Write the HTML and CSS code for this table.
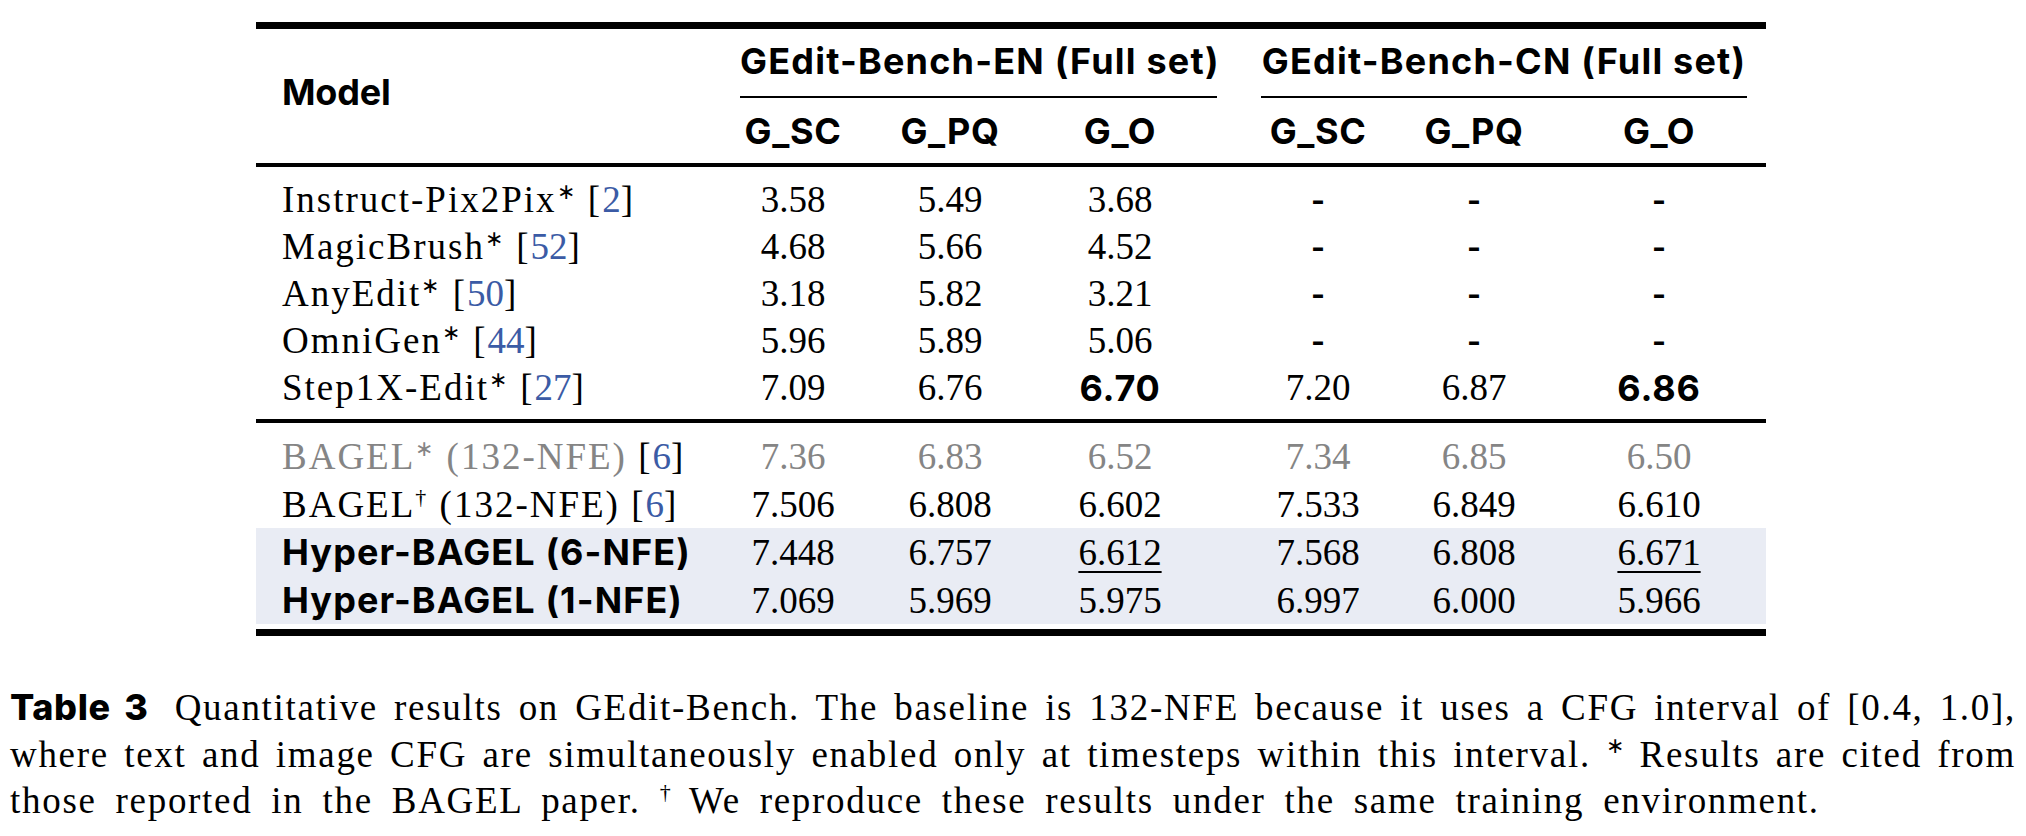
FILE: index.html
```html
<!DOCTYPE html>
<html lang="en">
<head>
<meta charset="utf-8">
<title>Table 3 — GEdit-Bench</title>
<link rel="stylesheet" href="styles.css">
</head>
<body>
<div class="figure">
  <table class="results">
    <colgroup>
      <col class="c-model"><col class="c-sc"><col class="c-pq"><col class="c-o">
      <col class="c-sc2"><col class="c-pq2"><col class="c-o2">
    </colgroup>
    <thead>
      <tr class="h1">
        <th rowspan="2" class="model-h">Model</th>
        <th colspan="3" class="grp"><div class="grp-label en">GEdit-Bench-EN (Full set)</div></th>
        <th colspan="3" class="grp"><div class="grp-label cn">GEdit-Bench-CN (Full set)</div></th>
      </tr>
      <tr class="h2">
        <th>G_SC</th><th>G_PQ</th><th class="o">G_O</th>
        <th>G_SC</th><th>G_PQ</th><th>G_O</th>
      </tr>
    </thead>
    <tbody class="group-a">
      <tr class="sep top"><td colspan="7"></td></tr>
      <tr><td class="name">Instruct-Pix2Pix<sup>∗</sup> [<span class="cite">2</span>]</td><td>3.58</td><td>5.49</td><td class="o">3.68</td><td class="na">-</td><td class="na">-</td><td class="na">-</td></tr>
      <tr><td class="name">MagicBrush<sup>∗</sup> [<span class="cite">52</span>]</td><td>4.68</td><td>5.66</td><td class="o">4.52</td><td class="na">-</td><td class="na">-</td><td class="na">-</td></tr>
      <tr><td class="name">AnyEdit<sup>∗</sup> [<span class="cite">50</span>]</td><td>3.18</td><td>5.82</td><td class="o">3.21</td><td class="na">-</td><td class="na">-</td><td class="na">-</td></tr>
      <tr><td class="name">OmniGen<sup>∗</sup> [<span class="cite">44</span>]</td><td>5.96</td><td>5.89</td><td class="o">5.06</td><td class="na">-</td><td class="na">-</td><td class="na">-</td></tr>
      <tr><td class="name">Step1X-Edit<sup>∗</sup> [<span class="cite">27</span>]</td><td>7.09</td><td>6.76</td><td class="o best">6.70</td><td>7.20</td><td>6.87</td><td class="best">6.86</td></tr>
      <tr class="sep bottom"><td colspan="7"></td></tr>
    </tbody>
    <tbody class="group-b">
      <tr class="sep top"><td colspan="7"></td></tr>
      <tr class="cited"><td class="name">BAGEL<sup>∗</sup> (132-NFE) <span class="br">[<span class="cite">6</span>]</span></td><td>7.36</td><td>6.83</td><td class="o">6.52</td><td>7.34</td><td>6.85</td><td>6.50</td></tr>
      <tr><td class="name">BAGEL<sup>†</sup> (132-NFE) [<span class="cite">6</span>]</td><td>7.506</td><td>6.808</td><td class="o">6.602</td><td>7.533</td><td>6.849</td><td>6.610</td></tr>
      <tr class="ours"><td class="name bold">Hyper-BAGEL (6-NFE)</td><td>7.448</td><td>6.757</td><td class="o"><span class="second">6.612</span></td><td>7.568</td><td>6.808</td><td><span class="second">6.671</span></td></tr>
      <tr class="ours"><td class="name bold">Hyper-BAGEL (1-NFE)</td><td>7.069</td><td>5.969</td><td class="o">5.975</td><td>6.997</td><td>6.000</td><td>5.966</td></tr>
      <tr class="sep end"><td colspan="7"></td></tr>
    </tbody>
  </table>

  <p class="caption">
    <span class="line"><span class="label">Table 3</span> Quantitative results on GEdit-Bench. The baseline is 132-NFE because it uses a CFG interval of [0.4, 1.0],</span>
    <span class="line">where text and image CFG are simultaneously enabled only at timesteps within this interval. <sup>∗</sup> Results are cited from</span>
    <span class="line last">those reported in the BAGEL paper. <sup>†</sup> We reproduce these results under the same training environment.</span>
  </p>
</div>
</body>
</html>
```

FILE: styles.css
```css
html, body {
  margin: 0;
  padding: 0;
  background: #ffffff;
}

body {
  width: 2026px;
  color: #000;
  font-family: "Liberation Serif", "Times New Roman", serif;
}

.figure {
  padding-top: 22px;
}

/* ---------- table ---------- */
.results {
  margin-left: 256px;
  width: 1510px;
  table-layout: fixed;
  border-collapse: collapse;
  border-top: 7px solid #000;
  border-bottom: 7px solid #000;
  font-size: 37px;
}

.c-model { width: 460px; }
.c-sc    { width: 154px; }
.c-pq    { width: 160px; }
.c-o     { width: 210px; }
.c-sc2   { width: 156px; }
.c-pq2   { width: 156px; }
.c-o2    { width: 214px; }

.results th,
.results td {
  padding: 0;
  text-align: center;
  white-space: nowrap;
}

.results th {
  font-family: Inter, Lato, "Noto Sans", sans-serif;
  font-weight: 700;
  font-size: 36px;
  letter-spacing: 0.6px;
}

.results .o { padding-right: 30px; }

thead { border-bottom: 4px solid #000; }

.model-h {
  text-align: left !important;
  padding-left: 26px !important;
  padding-bottom: 8px !important;
  vertical-align: middle;
  letter-spacing: -0.2px !important;
}

.h1 .grp { height: 67px; vertical-align: top; }

.grp-label {
  height: 67px;
  line-height: 64px;
  border-bottom: 2px solid #000;
  letter-spacing: 1.2px;
}
.grp-label.en { margin: 0 23px 0 24px; }
.grp-label.cn { margin: 0 19px 0 21px; }

.h2 th { height: 65px; line-height: 60px; }

.group-a { border-bottom: 4px solid #000; }

.group-a tr { height: 47px; }
.group-b tr { height: 48px; }

.results tr.sep td { height: auto; padding: 0; }
.group-a .sep.top td    { height: 9px; }
.group-a .sep.bottom td { height: 8px; }
.group-b .sep.top td    { height: 9px; }
.group-b .sep.end td    { height: 5px; }
.group-a tr.sep, .group-b tr.sep { height: auto; }

.results td.name {
  text-align: left;
  padding-left: 26px;
  letter-spacing: 2px;
}

.results sup {
  font-size: 22px;
  line-height: 0;
  vertical-align: 13px;
  letter-spacing: 0;
  margin-right: 2px;
}

.cite { color: #3b5ba5; letter-spacing: 0; }

.cited td { color: #858585; }
.cited .br { color: #000; }

.bold,
.best,
.na {
  font-family: Inter, Lato, "Noto Sans", sans-serif;
  font-weight: 700;
}
.results td.bold { font-size: 36px; letter-spacing: 1.1px; }
.best { font-size: 36px; letter-spacing: 0.8px; }
.na   { font-size: 30px; }

.ours td { background: #e9ecf4; }

.second {
  text-decoration: underline;
  text-decoration-thickness: 2px;
  text-underline-offset: 6px;
}

/* ---------- caption ---------- */
.caption {
  margin: 48px 0 0 10px;
  width: 2006px;
  font-size: 37px;
  line-height: 46.5px;
  letter-spacing: 1.7px;
}

.caption .line {
  display: block;
  white-space: nowrap;
  text-align: justify;
  text-align-last: justify;
}

.caption .line.last {
  text-align: left;
  text-align-last: left;
  word-spacing: 8px;
}

.caption .label {
  font-family: Inter, Lato, "Noto Sans", sans-serif;
  font-weight: 800;
  font-size: 36px;
  letter-spacing: 0.6px;
  margin-right: 10px;
}

.caption sup {
  font-size: 22px;
  line-height: 0;
  vertical-align: 14px;
  letter-spacing: 0;
}
```
